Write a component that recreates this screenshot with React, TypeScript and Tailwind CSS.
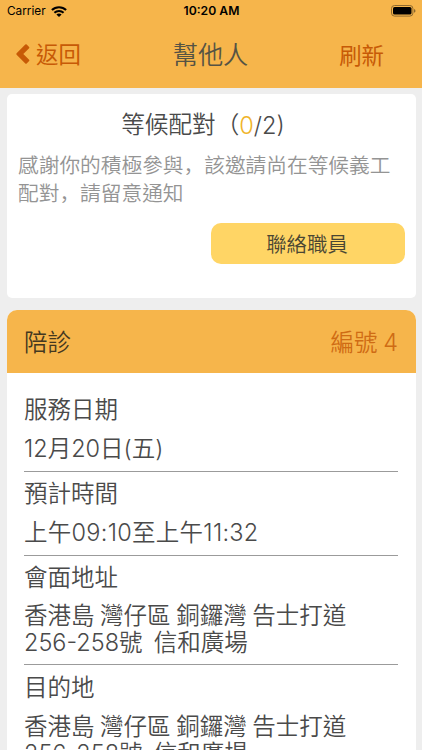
type DetailItem = {
  label: string;
  value: string;
  rowClass: string;
  valueClass: string;
};

const ADDRESS = "香港島 灣仔區 銅鑼灣 告士打道\n256-258號  信和廣場";

const details: DetailItem[] = [
  { label: "服務日期", value: "12月20日(五)", rowClass: "pt-[8px] pb-[9px]", valueClass: "mt-[11px]" },
  {
    label: "預計時間",
    value: "上午09:10至上午11:32",
    rowClass: "pt-[8px] pb-[9px]",
    valueClass: "mt-[11px] tracking-[0.28px]",
  },
  { label: "會面地址", value: ADDRESS, rowClass: "pt-[8px] pb-[8px]", valueClass: "mt-[10px] whitespace-pre" },
  { label: "目的地", value: ADDRESS, rowClass: "pt-[9px] pb-[8px]", valueClass: "mt-[11px] whitespace-pre" },
];

function StatusBar() {
  return (
    <div className="grid h-[22px] grid-cols-3 items-center pr-1.5 pl-[7px] text-[11.8px] text-black">
      <div className="flex items-center gap-[5px]">
        <span className="pt-[1px]">Carrier</span>
        <svg className="h-[11px] w-[16px]" viewBox="0 0 16 11" fill="none" stroke="currentColor">
          <path d="M0.9 4.1C4.8 0.2 11.2 0.2 15.1 4.1" strokeWidth="2.1" />
          <path d="M3.4 6.7C5.9 4.3 10.1 4.3 12.6 6.7" strokeWidth="2" />
          <path d="M8 11L5.4 8.4C6.8 7.1 9.2 7.1 10.6 8.4Z" fill="currentColor" stroke="none" />
        </svg>
      </div>
      <span className="pt-[1px] text-center text-[12.2px] font-semibold">10:20 AM</span>
      <svg className="ml-auto h-[12px] w-[25px]" viewBox="0 0 25 12">
        <rect x="0.5" y="0.5" width="21.4" height="10.6" rx="3" fill="none" stroke="#8f6a2f" />
        <rect x="2" y="2" width="18.5" height="7.6" rx="1.6" fill="#000" />
        <path d="M23.1 4V7.8C24.9 7 24.9 4.8 23.1 4Z" fill="#7b5b28" />
      </svg>
    </div>
  );
}

function NavBar() {
  return (
    <div className="grid h-[66px] grid-cols-3 items-center pr-[38px] pl-4 text-[#c75a06]">
      <button className="flex items-center gap-[6px] text-[22.4px]">
        <svg className="mt-[-1px] h-[20px] w-[14px]" viewBox="0 0 14 20" fill="currentColor">
          <path d="M0.6 9.3L9.3 0.5Q10 0 10.7 0.5L13.1 2.9Q13.7 3.6 13.1 4.3L7.3 10L13.1 15.7Q13.7 16.4 13.1 17.1L10.7 19.5Q10 20 9.3 19.5L0.6 10.7Q0 10 0.6 9.3Z" />
        </svg>
        返回
      </button>
      <h1 className="mt-[1px] pl-[21px] text-center text-[25.2px] font-[350] whitespace-nowrap text-[#555344]">幫他人</h1>
      <button className="mt-[1px] text-right text-[22.4px]">刷新</button>
    </div>
  );
}

function Comma() {
  return <span className="font-['Noto_Sans_CJK_SC',sans-serif]">，</span>;
}

function MatchCard() {
  return (
    <section className="h-[204px] rounded-[5px] bg-white px-[11px] pt-[14px]">
      <h2 className="pr-[17px] text-center text-[23.6px] leading-[34px] text-[#4a4a4a]">
        等候配對（
        <span className="relative top-px">
          <span className="text-[#f0b429]">0</span>/2)
        </span>
      </h2>
      <p className="mt-[9px] text-[20.7px] leading-[27px] text-[#949494]">
        感謝你的積極參與<Comma />該邀請尚在等候義工
        <br />
        配對<Comma />請留意通知
      </p>
      <button className="mt-[16px] ml-auto block h-[41px] w-[194px] rounded-[10px] bg-[#ffd565] pt-[3px] pr-[2px] text-[20.4px] text-[#4a4633]">
        聯絡職員
      </button>
    </section>
  );
}

function DetailRow({ label, value, rowClass, valueClass }: DetailItem) {
  return (
    <div className={`border-b border-[#9b9b9b] ${rowClass}`}>
      <div className="leading-[28px]">{label}</div>
      <div className={`leading-[27px] ${valueClass}`}>{value}</div>
    </div>
  );
}

export default function App() {
  return (
    <div className="h-[750px] overflow-hidden bg-[#eeeeee] font-['Inter','Noto_Sans_CJK_TC',sans-serif]">
      <header className="h-[88px] bg-[#f6b54b]">
        <StatusBar />
        <NavBar />
      </header>
      <main className="flex flex-col gap-[12px] pt-[6px] pr-[6px] pl-[7px] font-[350]">
        <MatchCard />
        <section className="overflow-hidden rounded-t-[10px] bg-white text-[23.5px] text-[#4a4a4a] [word-spacing:-1px]">
          <div className="flex h-[63px] items-center justify-between bg-[#f6b54b] pt-[2px] pr-[18px] pl-[17px]">
            <span className="text-[#443820]">陪診</span>
            <span className="text-[#cf6b14]">編號 4</span>
          </div>
          <div className="pt-[15px] pr-[18px] pl-[17px]">
            {details.map((item) => (
              <DetailRow key={item.label} {...item} />
            ))}
          </div>
        </section>
      </main>
    </div>
  );
}
